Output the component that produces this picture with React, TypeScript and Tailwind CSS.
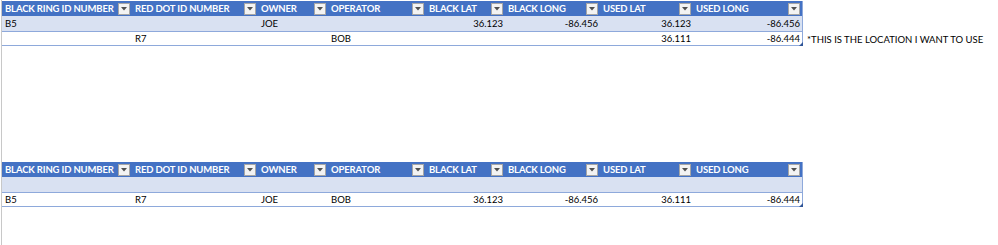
import React from "react";

const cols = "grid grid-cols-[130px_126px_70px_98px_79px_95px_93px_109px]";
const headers = [
  "BLACK RING ID NUMBER",
  "RED DOT ID NUMBER",
  "OWNER",
  "OPERATOR",
  "BLACK LAT",
  "BLACK LONG",
  "USED LAT",
  "USED LONG",
];
const numeric = [false, false, false, false, true, true, true, true];

function FilterBtn() {
  return (
    <div className="w-[12px] h-[12px] bg-[#f3f3f3] border border-[#a6a6a6] flex items-center justify-center shrink-0">
      <svg width="6" height="4" viewBox="0 0 6 4">
        <polygon points="0,0 6,0 3,3.5" fill="#505050" />
      </svg>
    </div>
  );
}

function Header() {
  return (
    <div className={`${cols} h-[15px] bg-[#4472c4]`}>
      {headers.map((h) => (
        <div key={h} className="flex items-center justify-between pl-[3px] pr-[2px] h-[15px]">
          <span className="text-white font-bold leading-none whitespace-nowrap tracking-[-0.15px]">{h}</span>
          <FilterBtn />
        </div>
      ))}
    </div>
  );
}

function Row({ cells, shaded, last, topBorder }: { cells: string[]; shaded?: boolean; last?: boolean; topBorder?: boolean }) {
  return (
    <div
      className={`${cols} h-[15px] ${shaded ? "bg-[#d9e1f2]" : "bg-white"} ${topBorder ? "border-t border-[#8ea9db]" : ""} ${last ? "border-b border-[#8ea9db]" : ""} relative`}
    >
      {cells.map((c, i) => (
        <div
          key={i}
          className={`flex items-center h-full px-[3px] ${numeric[i] ? "justify-end pr-[2px]" : "justify-start"} text-black leading-none whitespace-nowrap`}
        >
          {c}
        </div>
      ))}
      {last && (
        <div className="absolute right-[-1px] bottom-[-1px] w-0 h-0 border-l-[4px] border-l-transparent border-b-[4px] border-b-[#2f5597]" />
      )}
    </div>
  );
}

export default function App() {
  return (
    <div
      className="w-[998px] h-[245px] bg-white relative overflow-hidden text-[9.5px]"
      style={{ fontFamily: "Lato, 'Liberation Sans', sans-serif" }}
    >
      <div className="absolute left-[1px] top-0 bottom-0 w-px bg-[#c8c8c8]" />
      <div className="pl-[2px] pt-[1px] flex flex-col">
        <div className="flex items-start">
          <div className="w-[800px] border-x border-[#8ea9db] box-content -mx-px">
            <Header />
            <Row shaded cells={["B5", "", "JOE", "", "36.123", "-86.456", "36.123", "-86.456"]} />
            <Row topBorder last cells={["", "R7", "", "BOB", "", "", "36.111", "-86.444"]} />
          </div>
          <div className="pt-[31px] pl-[5px]">
            <div className="h-[15px] flex items-center leading-none whitespace-nowrap text-black">
              *THIS IS THE LOCATION I WANT TO USE
            </div>
          </div>
        </div>
        <div className="mt-[115px] w-[800px] border-x border-[#8ea9db] box-content -mx-px">
          <Header />
          <Row shaded cells={["", "", "", "", "", "", "", ""]} />
          <Row topBorder last cells={["B5", "R7", "JOE", "BOB", "36.123", "-86.456", "36.111", "-86.444"]} />
        </div>
      </div>
    </div>
  );
}
